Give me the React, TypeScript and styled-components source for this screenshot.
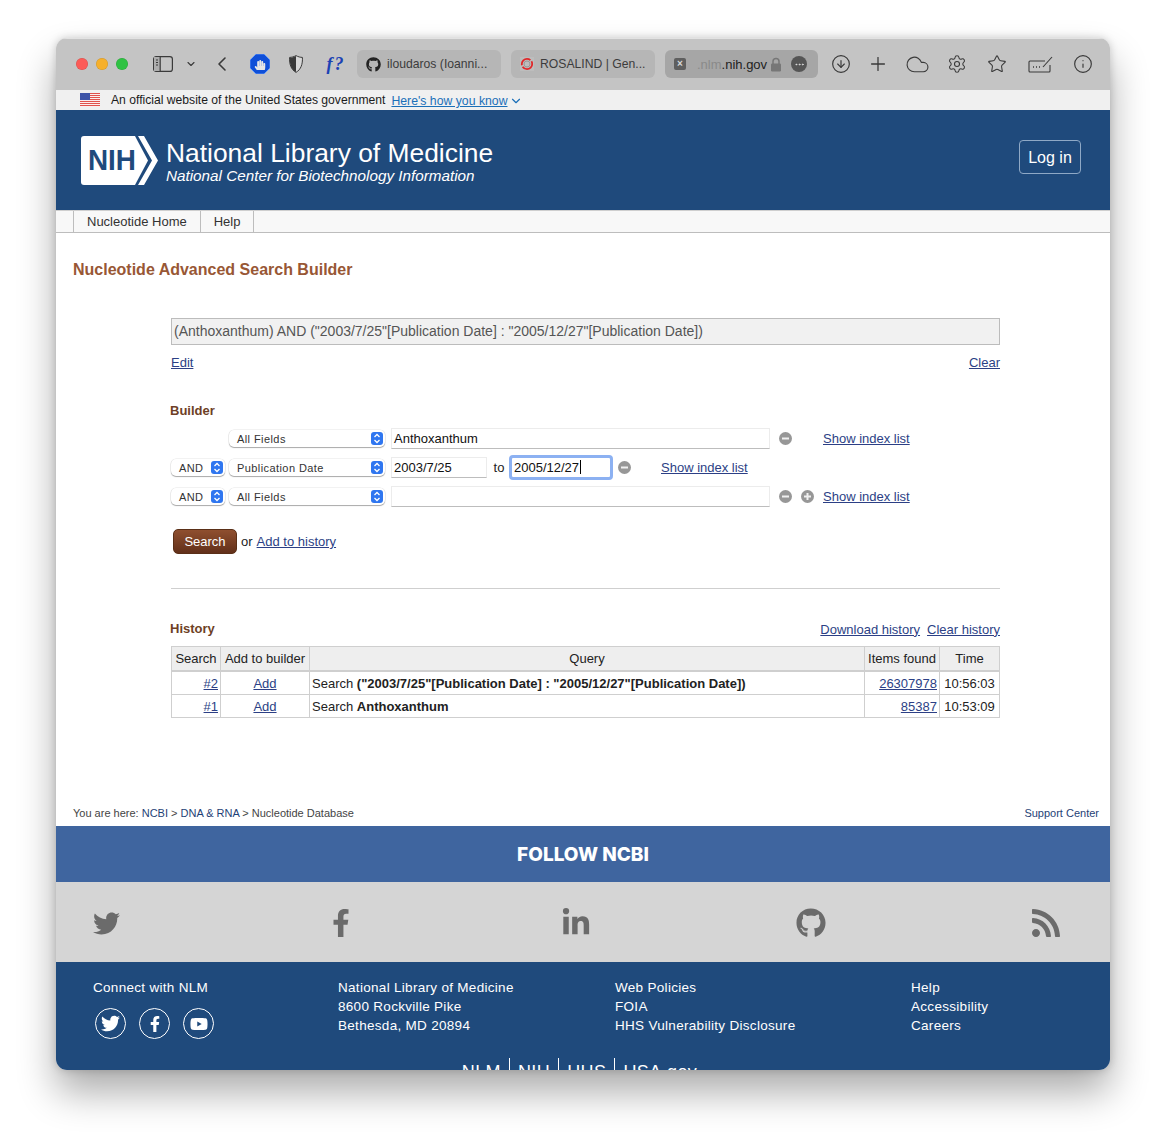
import React from 'react';
import styled, { createGlobalStyle } from 'styled-components';
import { CircleArrowDown, Plus, Cloud, Settings, Star, Info, ChevronLeft, ChevronDown, Ellipsis } from 'lucide-react';
import { FaTwitter, FaFacebookF, FaLinkedinIn, FaGithub, FaRss, FaYoutube, FaHandPaper } from 'react-icons/fa';

const GlobalStyle = createGlobalStyle`
    html, body {
        margin: 0;
        padding: 0;
        background: #fff;
        font-family: "Liberation Sans", Arial, sans-serif;
    }
    svg {
        flex: none;
    }
`;

const Page = styled.div`
    width: 1166px;
    height: 1144px;
    padding: 38px 56px 0;
    box-sizing: border-box;
    overflow: hidden;
`;

const BrowserWindow = styled.div`
    width: 1054px;
    height: 1032px;
    display: flex;
    flex-direction: column;
    background: #fff;
    border-radius: 11px;
    overflow: hidden;
    box-shadow: 0 22px 38px rgba(0, 0, 0, 0.33), 0 0 8px rgba(0, 0, 0, 0.18);
`;

const Toolbar = styled.div`
    height: 52px;
    flex: none;
    display: flex;
    align-items: center;
    padding-left: 20px;
    background: #c4c4c4;
    color: #3a3a3a;
    box-shadow: inset 0 1px 0 #e2e2e2;
`;

const Lights = styled.div`
    display: flex;
    gap: 8px;
`;

const Light = styled.span<{ $c: string }>`
    width: 12px;
    height: 12px;
    border-radius: 50%;
    background: ${(p) => p.$c};
    box-shadow: inset 0 0 0 0.5px rgba(0, 0, 0, 0.15);
`;

const ToolSlot = styled.div<{ $w: number; $ml: number }>`
    width: ${(p) => p.$w}px;
    margin-left: ${(p) => p.$ml}px;
    flex: none;
    display: flex;
    align-items: center;
    justify-content: center;
`;

const FxMark = styled.span`
    font: italic bold 18px "Liberation Serif", serif;
    letter-spacing: 2px;
    color: #1b42b4;
    white-space: nowrap;
`;

const Tab = styled.div<{ $w: number; $ml: number; $active?: boolean }>`
    width: ${(p) => p.$w}px;
    margin-left: ${(p) => p.$ml}px;
    height: 28px;
    flex: none;
    box-sizing: border-box;
    display: flex;
    align-items: center;
    gap: 6px;
    padding: 0 9px;
    border-radius: 6px;
    background: ${(p) => (p.$active ? '#a6a6a6' : '#b6b6b6')};
    font-size: 12.2px;
    color: #3c3c3c;
    white-space: nowrap;
`;

const AddressHost = styled.span`
    font-size: 13px;
    color: #222;
    margin-left: 5px;
    margin-right: -3px;
`;

const FadedHost = styled.span`
    color: #8a8a8a;
`;

const MoreDot = styled.span`
    width: 16px;
    height: 16px;
    margin-left: auto;
    margin-right: 2px;
    border-radius: 50%;
    background: #555;
    color: #ddd;
    display: flex;
    align-items: center;
    justify-content: center;
`;

const CloseChip = styled.span`
    width: 12px;
    height: 12px;
    border-radius: 2px;
    background: #5f5f5f;
    color: #d8d8d8;
    font: bold 10px/12px "Liberation Sans", sans-serif;
    text-align: center;
`;

const GovBanner = styled.div`
    height: 20px;
    flex: none;
    display: flex;
    align-items: center;
    padding-left: 24px;
    background: #f0f0f0;
    font-size: 12.25px;
    color: #1b1b1b;
`;

const GovText = styled.span`
    margin-left: 11px;
    font-size: 12.15px;
`;

const GovLink = styled.a`
    margin-left: 6px;
    margin-top: 2px;
    color: #1a6fb8;
    text-decoration: underline;
    display: flex;
    align-items: center;
    gap: 1px;
`;

const SiteHeader = styled.div`
    height: 100px;
    flex: none;
    display: flex;
    align-items: center;
    padding: 0 29px 0 25px;
    background: #1f4a7c;
    color: #fff;
`;

const LogoWrap = styled.div`
    display: flex;
    margin-top: 1px;
`;

const Brand = styled.div`
    margin-left: 7px;
    margin-top: 2px;
`;

const BrandTitle = styled.div`
    font-size: 26.4px;
    line-height: 30px;
`;

const BrandSub = styled.div`
    font-size: 15.25px;
    line-height: 18px;
    font-style: italic;
    margin-top: -1px;
`;

const LoginButton = styled.div`
    margin-left: auto;
    margin-top: -6px;
    width: 62px;
    height: 34px;
    box-sizing: border-box;
    border: 1px solid #8fa9c6;
    border-radius: 4px;
    font-size: 16px;
    line-height: 33px;
    text-align: center;
`;

const NavStrip = styled.div`
    height: 23px;
    flex: none;
    box-sizing: border-box;
    display: flex;
    padding-left: 17px;
    background: #f8f8f8;
    border-top: 1px solid #cfcfcf;
    border-bottom: 1px solid #bdbdbd;
`;

const NavItem = styled.div`
    padding: 0 13px;
    border-left: 1px solid #bdbdbd;
    font-size: 13px;
    line-height: 21px;
    color: #333;
    &:last-child {
        border-right: 1px solid #bdbdbd;
    }
`;

const Main = styled.div`
    flex: none;
    height: 593px;
    box-sizing: border-box;
    display: flex;
    flex-direction: column;
    padding-top: 27px;
`;

const PageTitle = styled.h1`
    margin: 0 0 0 17px;
    font-size: 16px;
    line-height: 19px;
    font-weight: bold;
    color: #985735;
`;

const Builder = styled.div`
    width: 829px;
    margin: 39px 0 0 115px;
    font-size: 13px;
    color: #222;
`;

const Link = styled.a`
    color: #2c3f85;
    text-decoration: underline;
`;

const QueryBox = styled.div`
    height: 27px;
    box-sizing: border-box;
    padding-left: 2px;
    background: #f1f1f1;
    border: 1px solid #bcbcbc;
    font-size: 14px;
    line-height: 25px;
    color: #555;
`;

const SpacedRow = styled.div`
    display: flex;
    justify-content: space-between;
    line-height: 16px;
    margin-top: 10px;
`;

const SectionHead = styled.h2`
    margin: 32px 0 0 -1px;
    font-size: 13px;
    line-height: 16px;
    font-weight: bold;
    color: #6e3f26;
`;

const Rows = styled.div`
    margin-top: 9px;
    display: flex;
    flex-direction: column;
    gap: 8px;
`;

const Row = styled.div`
    height: 21px;
    display: flex;
    align-items: center;
`;

const SelectBox = styled.div<{ $w: number; $ml?: number }>`
    width: ${(p) => p.$w}px;
    margin-left: ${(p) => p.$ml || 0}px;
    height: 17px;
    flex: none;
    box-sizing: border-box;
    display: flex;
    align-items: center;
    justify-content: space-between;
    padding: 0 2px 0 8px;
    background: #fff;
    border-radius: 5px;
    box-shadow: 0 0 0 0.5px rgba(0, 0, 0, 0.1), 0 1px 1px rgba(0, 0, 0, 0.3);
    font-size: 11px;
    letter-spacing: 0.42px;
    color: #333;
`;

const Stepper = styled.span`
    width: 12px;
    height: 13px;
    border-radius: 3px;
    background: #2f76f0;
    display: flex;
    align-items: center;
    justify-content: center;
`;

const TextBox = styled.div<{ $w: number; $ml?: number; $focus?: boolean }>`
    width: ${(p) => p.$w}px;
    margin-left: ${(p) => p.$ml || 0}px;
    height: 21px;
    flex: none;
    box-sizing: border-box;
    padding-left: 2px;
    background: #fff;
    border: 1px solid #ececec;
    border-bottom-color: #bdbdbd;
    font-size: 13px;
    line-height: 19px;
    color: #111;
    ${(p) => p.$focus && `
        outline: 3px solid #8cb1f2;
        outline-offset: -1px;
        border-radius: 2px;
    `}
`;

const Caret = styled.span`
    display: inline-block;
    width: 1px;
    height: 14px;
    margin-left: 1px;
    vertical-align: -2px;
    background: #000;
`;

const ToWord = styled.span`
    width: 24px;
    text-align: center;
    flex: none;
`;

const RoundBtn = styled.span<{ $ml: number }>`
    width: 13px;
    height: 13px;
    margin-left: ${(p) => p.$ml}px;
    flex: none;
    border-radius: 50%;
    background: #979797;
    display: flex;
    align-items: center;
    justify-content: center;
`;

const IndexLink = styled(Link)<{ $ml: number }>`
    margin-left: ${(p) => p.$ml}px;
`;

const Actions = styled.div`
    margin-top: 22px;
    margin-left: 2px;
    display: flex;
    align-items: center;
    gap: 4px;
`;

const SearchButton = styled.div`
    width: 64px;
    height: 25px;
    box-sizing: border-box;
    border: 1px solid #5a2f17;
    border-radius: 5px;
    background: linear-gradient(#8f4f2f, #62301a);
    color: #fff;
    font-size: 13px;
    line-height: 23px;
    text-align: center;
`;

const Rule = styled.hr`
    margin: 34px 0 0;
    border: 0;
    border-top: 1px solid #cfcfcf;
`;

const HistoryBar = styled.div`
    margin-top: 32px;
    display: flex;
    align-items: center;
    justify-content: space-between;
    height: 16px;
`;

const HistoryHead = styled(SectionHead)`
    margin: 0 0 0 -1px;
`;

const HistoryLinks = styled.div`
    display: flex;
    gap: 7px;
`;

const HistoryTable = styled.table`
    width: 829px;
    margin-top: 9px;
    border-collapse: collapse;
    table-layout: fixed;
    font-size: 13px;
    color: #222;
`;

const Th = styled.th<{ $w?: number }>`
    width: ${(p) => (p.$w ? `${p.$w}px` : 'auto')};
    height: 23px;
    padding: 0;
    background: #eeeeee;
    border: 1px solid #cfcfcf;
    border-bottom-width: 2px;
    font-weight: normal;
    text-align: center;
`;

const Td = styled.td<{ $align?: string }>`
    height: 22px;
    padding: 0 2px;
    border: 1px solid #cfcfcf;
    text-align: ${(p) => p.$align || 'left'};
    white-space: nowrap;
    overflow: hidden;
`;

const Crumbs = styled.div`
    margin-top: auto;
    display: flex;
    justify-content: space-between;
    padding: 0 11px 6px 17px;
    font-size: 11px;
    line-height: 13px;
    color: #444;
`;

const CrumbLink = styled.a`
    color: #1f3f76;
`;

const FollowBand = styled.div`
    height: 56px;
    flex: none;
    background: #3f659f;
    color: #fff;
    font-family: Inter, "Liberation Sans", sans-serif;
    font-size: 19px;
    font-weight: 800;
    line-height: 57px;
    text-align: center;
`;

const SocialBand = styled.div`
    height: 80px;
    flex: none;
    box-sizing: border-box;
    display: flex;
    align-items: center;
    justify-content: space-between;
    padding: 2px 49px 0 35px;
    background: #d5d5d5;
    color: #6b6b6b;
`;

const SocialCell = styled.span`
    width: 30px;
    display: flex;
    justify-content: center;
`;

const FootBlue = styled.div`
    flex: 1;
    min-height: 0;
    overflow: hidden;
    background: #1f4a7c;
    color: #fff;
    font-size: 13.5px;
    line-height: 19px;
    letter-spacing: 0.3px;
`;

const FootCols = styled.div`
    display: grid;
    grid-template-columns: 245px 277px 296px 1fr;
    padding: 16px 0 0 37px;
`;

const FootCol = styled.div`
    display: flex;
    flex-direction: column;
`;

const Circles = styled.div`
    display: flex;
    gap: 13px;
    margin: 11px 0 0 2px;
`;

const Circle = styled.span`
    width: 29px;
    height: 29px;
    border: 1px solid #fff;
    border-radius: 50%;
    display: flex;
    align-items: center;
    justify-content: center;
`;

const FootNav = styled.div`
    margin: 19px 0 0 -7px;
    display: flex;
    justify-content: center;
    font-size: 18px;
    letter-spacing: 0.4px;
`;

const FootNavItem = styled.span`
    padding: 5px 8px 0;
    height: 30px;
    border-left: 1px solid #fff;
    &:first-child {
        border-left: 0;
    }
`;

const Logo = () => (
    <svg width="78" height="49" viewBox="0 0 78 49">
        <path d="M3 0H54L67 24.500 54 49H3a3 3 0 0 1-3-3V3a3 3 0 0 1 3-3z" fill="#fff" />
        <path d="M57 0H63L77 24.500 63 49H57L71 24.500z" fill="#fff" />
        <text x="7" y="34" fontFamily="Liberation Sans" fontWeight="bold" fontSize="29" fill="#1f4a7c" textLength="48" lengthAdjust="spacingAndGlyphs">NIH</text>
    </svg>
);

const Flag = () => (
    <svg width="20" height="14" viewBox="0 0 20 14">
        <rect width="20" height="14" fill="#fff" />
        {[0, 2, 4, 6, 8, 10, 12].map((y) => (
            <rect key={y} y={y} width="20" height="1.1" fill="#e0524c" />
        ))}
        <rect width="10" height="7" fill="#3f55a8" />
    </svg>
);

const SidebarIcon = () => (
    <svg width="20" height="16" viewBox="0 0 20 16" fill="none" stroke="#3a3a3a" strokeWidth="1.2">
        <rect x="0.6" y="0.6" width="18.8" height="14.8" rx="2.5" />
        <rect x="1" y="1" width="6" height="14" fill="#adadad" stroke="none" />
        <path d="M7.2 1V15" />
        <path d="M3 4H5M3 6.500H5M3 9H5" />
    </svg>
);

const HandBadge = () => (
    <svg width="20" height="20" viewBox="0 0 20 20">
        <path d="M6 0H14L20 6V14L14 20H6L0 14V6z" fill="#0f4fd8" stroke="#6aa0ff" strokeWidth="0.8" />
        <foreignObject x="4" y="4" width="12" height="12">
            <FaHandPaper size={12} color="#e6e6e6" />
        </foreignObject>
    </svg>
);

const HalfShield = () => (
    <svg width="14" height="18" viewBox="0 0 14 18">
        <path d="M7 .6C9 1.800 11.500 2.400 13.400 2.400 13.800 9 12 14.500 7 17.400 2 14.500.2 9 .6 2.400 2.500 2.400 5 1.800 7 .6z" fill="#d8d8d8" stroke="#3a3a3a" strokeWidth="1" />
        <path d="M7 1V17C2 14.500.5 9 .8 2.800 3 2.800 5 2 7 1z" fill="#3a3a3a" />
    </svg>
);

const RosalindMark = () => (
    <svg width="14" height="14" viewBox="0 0 14 14" fill="none">
        <rect width="14" height="14" fill="#bdbdbd" />
        <circle cx="7" cy="7" r="3" stroke="#999" strokeWidth="1" />
        <circle cx="7" cy="7" r="5.200" stroke="#e0282a" strokeWidth="1.800" strokeDasharray="13 1.500" />
    </svg>
);

const PadLock = () => (
    <svg width="12" height="15" viewBox="0 0 12 15" fill="none">
        <path d="M3 7V4.500a3 3 0 0 1 6 0V7" stroke="#777" strokeWidth="1.500" />
        <rect x="1" y="6.500" width="10" height="8" rx="1.200" fill="#777" />
    </svg>
);

const KeyboardCard = () => (
    <svg width="25" height="17" viewBox="0 0 25 17" fill="none" stroke="#3a3a3a" strokeWidth="1.1">
        <path d="M17 5H2a1 1 0 0 0-1 1V15a1 1 0 0 0 1 1H21a1 1 0 0 0 1-1V9" />
        <path d="M15 11L24 1" />
        <path d="M5 11H6M8 11H9M11 11H12" strokeWidth="1.500" />
    </svg>
);

const StepArrows = () => (
    <svg width="8" height="11" viewBox="0 0 8 11" fill="none" stroke="#fff" strokeWidth="1.300">
        <path d="M1.500 4L4 1.500 6.500 4M1.500 7L4 9.500 6.500 7" />
    </svg>
);

const RoundBtnInner = ({ d }: { d: string }) => (
    <svg width="13" height="13" viewBox="0 0 13 13" fill="none" stroke="#f0f0f0" strokeWidth="2">
        <path d={d} />
    </svg>
);

const Minus = () => <RoundBtnInner d="M3 6.500H10" />;

const history = [
    { id: '#2', term: '("2003/7/25"[Publication Date] : "2005/12/27"[Publication Date])', count: '26307978', time: '10:56:03' },
    { id: '#1', term: 'Anthoxanthum', count: '85387', time: '10:53:09' },
];

const App = () => (
    <Page>
        <GlobalStyle />
        <BrowserWindow>
            <Toolbar>
                <Lights>
                    <Light $c="#fc5b57" />
                    <Light $c="#f6b02c" />
                    <Light $c="#2fc243" />
                </Lights>
                <ToolSlot $w={20} $ml={25}><SidebarIcon /></ToolSlot>
                <ToolSlot $w={10} $ml={13}><ChevronDown size={12} strokeWidth={2.2} /></ToolSlot>
                <ToolSlot $w={14} $ml={19}><ChevronLeft size={24} strokeWidth={1.6} /></ToolSlot>
                <ToolSlot $w={22} $ml={20}><HandBadge /></ToolSlot>
                <ToolSlot $w={17} $ml={16}><HalfShield /></ToolSlot>
                <ToolSlot $w={20} $ml={22}><FxMark>f?</FxMark></ToolSlot>
                <Tab $w={144} $ml={11}><FaGithub size={15} color="#222" />iloudaros (Ioanni...</Tab>
                <Tab $w={144} $ml={10}><RosalindMark />ROSALIND | Gen...</Tab>
                <Tab $w={153} $ml={10} $active>
                    <CloseChip>×</CloseChip>
                    <AddressHost><FadedHost>.nlm</FadedHost>.nih.gov</AddressHost>
                    <PadLock />
                    <MoreDot><Ellipsis size={11} /></MoreDot>
                </Tab>
                <ToolSlot $w={20} $ml={13}><CircleArrowDown size={20} strokeWidth={1.4} /></ToolSlot>
                <ToolSlot $w={20} $ml={17}><Plus size={22} strokeWidth={1.4} /></ToolSlot>
                <ToolSlot $w={24} $ml={17}><Cloud size={25} strokeWidth={1.1} /></ToolSlot>
                <ToolSlot $w={20} $ml={18}><Settings size={20} strokeWidth={1.3} /></ToolSlot>
                <ToolSlot $w={20} $ml={20}><Star size={20} strokeWidth={1.3} /></ToolSlot>
                <ToolSlot $w={25} $ml={21}><KeyboardCard /></ToolSlot>
                <ToolSlot $w={20} $ml={20}><Info size={20} strokeWidth={1.4} /></ToolSlot>
            </Toolbar>
            <GovBanner>
                <Flag />
                <GovText>An official website of the United States government</GovText>
                <GovLink>Here's how you know<ChevronDown size={14} /></GovLink>
            </GovBanner>
            <SiteHeader>
                <LogoWrap><Logo /></LogoWrap>
                <Brand>
                    <BrandTitle>National Library of Medicine</BrandTitle>
                    <BrandSub>National Center for Biotechnology Information</BrandSub>
                </Brand>
                <LoginButton>Log in</LoginButton>
            </SiteHeader>
            <NavStrip>
                <NavItem>Nucleotide Home</NavItem>
                <NavItem>Help</NavItem>
            </NavStrip>
            <Main>
                <PageTitle>Nucleotide Advanced Search Builder</PageTitle>
                <Builder>
                    <QueryBox>(Anthoxanthum) AND ("2003/7/25"[Publication Date] : "2005/12/27"[Publication Date])</QueryBox>
                    <SpacedRow>
                        <Link>Edit</Link>
                        <Link>Clear</Link>
                    </SpacedRow>
                    <SectionHead>Builder</SectionHead>
                    <Rows>
                        <Row>
                            <SelectBox $w={156} $ml={58}>All Fields<Stepper><StepArrows /></Stepper></SelectBox>
                            <TextBox $w={379} $ml={6}>Anthoxanthum</TextBox>
                            <RoundBtn $ml={9}><Minus /></RoundBtn>
                            <IndexLink $ml={31}>Show index list</IndexLink>
                        </Row>
                        <Row>
                            <SelectBox $w={54}>AND<Stepper><StepArrows /></Stepper></SelectBox>
                            <SelectBox $w={156} $ml={4}>Publication Date<Stepper><StepArrows /></Stepper></SelectBox>
                            <TextBox $w={96} $ml={6}>2003/7/25</TextBox>
                            <ToWord>to</ToWord>
                            <TextBox $w={100} $focus>2005/12/27<Caret /></TextBox>
                            <RoundBtn $ml={7}><Minus /></RoundBtn>
                            <IndexLink $ml={30}>Show index list</IndexLink>
                        </Row>
                        <Row>
                            <SelectBox $w={54}>AND<Stepper><StepArrows /></Stepper></SelectBox>
                            <SelectBox $w={156} $ml={4}>All Fields<Stepper><StepArrows /></Stepper></SelectBox>
                            <TextBox $w={379} $ml={6} />
                            <RoundBtn $ml={9}><Minus /></RoundBtn>
                            <RoundBtn $ml={9}><RoundBtnInner d="M3 6.500H10M6.500 3V10" /></RoundBtn>
                            <IndexLink $ml={9}>Show index list</IndexLink>
                        </Row>
                    </Rows>
                    <Actions>
                        <SearchButton>Search</SearchButton>
                        or <Link>Add to history</Link>
                    </Actions>
                    <Rule />
                    <HistoryBar>
                        <HistoryHead>History</HistoryHead>
                        <HistoryLinks>
                            <Link>Download history</Link>
                            <Link>Clear history</Link>
                        </HistoryLinks>
                    </HistoryBar>
                    <HistoryTable>
                        <thead>
                            <tr>
                                <Th $w={48}>Search</Th>
                                <Th $w={88}>Add to builder</Th>
                                <Th>Query</Th>
                                <Th $w={74}>Items found</Th>
                                <Th $w={59}>Time</Th>
                            </tr>
                        </thead>
                        <tbody>
                            {history.map((h) => (
                                <tr key={h.id}>
                                    <Td $align="right"><Link>{h.id}</Link></Td>
                                    <Td $align="center"><Link>Add</Link></Td>
                                    <Td>Search <b>{h.term}</b></Td>
                                    <Td $align="right"><Link>{h.count}</Link></Td>
                                    <Td $align="center">{h.time}</Td>
                                </tr>
                            ))}
                        </tbody>
                    </HistoryTable>
                </Builder>
                <Crumbs>
                    <span>You are here: <CrumbLink>NCBI</CrumbLink> &gt; <CrumbLink>DNA &amp; RNA</CrumbLink> &gt; Nucleotide Database</span>
                    <CrumbLink>Support Center</CrumbLink>
                </Crumbs>
            </Main>
            <FollowBand>FOLLOW NCBI</FollowBand>
            <SocialBand>
                <SocialCell><FaTwitter size={27} /></SocialCell>
                <SocialCell><FaFacebookF size={28} /></SocialCell>
                <SocialCell><FaLinkedinIn size={30} /></SocialCell>
                <SocialCell><FaGithub size={30} /></SocialCell>
                <SocialCell><FaRss size={32} /></SocialCell>
            </SocialBand>
            <FootBlue>
                <FootCols>
                    <FootCol>
                        Connect with NLM
                        <Circles>
                            <Circle><FaTwitter size={19} /></Circle>
                            <Circle><FaFacebookF size={16} /></Circle>
                            <Circle><FaYoutube size={18} /></Circle>
                        </Circles>
                    </FootCol>
                    <FootCol>
                        <span>National Library of Medicine</span>
                        <span>8600 Rockville Pike</span>
                        <span>Bethesda, MD 20894</span>
                    </FootCol>
                    <FootCol>
                        <span>Web Policies</span>
                        <span>FOIA</span>
                        <span>HHS Vulnerability Disclosure</span>
                    </FootCol>
                    <FootCol>
                        <span>Help</span>
                        <span>Accessibility</span>
                        <span>Careers</span>
                    </FootCol>
                </FootCols>
                <FootNav>
                    <FootNavItem>NLM</FootNavItem>
                    <FootNavItem>NIH</FootNavItem>
                    <FootNavItem>HHS</FootNavItem>
                    <FootNavItem>USA.gov</FootNavItem>
                </FootNav>
            </FootBlue>
        </BrowserWindow>
    </Page>
);

export default App;
